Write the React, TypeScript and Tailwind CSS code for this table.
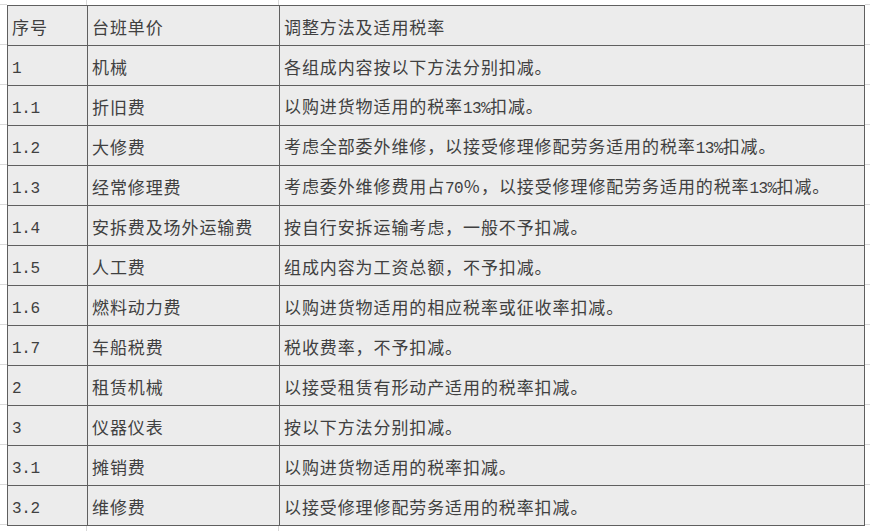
import React from 'react';

const ROWS: [string, string, string][] = [
  ['序号', '台班单价', '调整方法及适用税率'],
  ['1', '机械', '各组成内容按以下方法分别扣减。'],
  ['1.1', '折旧费', '以购进货物适用的税率13%扣减。'],
  ['1.2', '大修费', '考虑全部委外维修，以接受修理修配劳务适用的税率13%扣减。'],
  ['1.3', '经常修理费', '考虑委外维修费用占70％，以接受修理修配劳务适用的税率13%扣减。'],
  ['1.4', '安拆费及场外运输费', '按自行安拆运输考虑，一般不予扣减。'],
  ['1.5', '人工费', '组成内容为工资总额，不予扣减。'],
  ['1.6', '燃料动力费', '以购进货物适用的相应税率或征收率扣减。'],
  ['1.7', '车船税费', '税收费率，不予扣减。'],
  ['2', '租赁机械', '以接受租赁有形动产适用的税率扣减。'],
  ['3', '仪器仪表', '按以下方法分别扣减。'],
  ['3.1', '摊销费', '以购进货物适用的税率扣减。'],
  ['3.2', '维修费', '以接受修理修配劳务适用的税率扣减。'],
];

// ascii runs get the half-width mono face, like the sheet's SimSun digits
const Mixed: React.FC<{ text: string }> = ({ text }) => {
  const parts = text.split(/([0-9.%]+)/);
  return (
    <>
      {parts.map((p, i) =>
        /^[0-9.%]+$/.test(p) ? (
          <span key={i} className="font-['Liberation_Mono',monospace] text-[16px] tracking-[-0.6px]">
            {p}
          </span>
        ) : (
          <span key={i}>{p}</span>
        )
      )}
    </>
  );
};

const faint = 'border-[#d9d9d9]';
const cell = 'border border-[#5f5f5f] px-[4px] pt-[3px] text-[17px] tracking-[0.9px] whitespace-nowrap';

export default function App() {
  return (
    <div className="w-[870px] h-[531px] bg-white overflow-hidden flex font-['Noto_Sans_CJK_SC',sans-serif] text-[#404040]">
      {/* left gutter of the sheet */}
      <div className="w-[7px] flex flex-col">
        <div className={`h-[5px] border-b ${faint}`}></div>
        {ROWS.map((_, i) => (
          <div key={i} className={`h-[40px] border-b ${faint}`}></div>
        ))}
      </div>

      <div className="flex flex-col">
        <div className="h-[5px] flex">
          <div className={`w-[80px] border-r ${faint}`}></div>
          <div className={`w-[192px] border-r ${faint}`}></div>
          <div className="w-[584px]"></div>
        </div>
        <table className="border-collapse bg-[#ececec] table-fixed w-[857px]">
          <colgroup>
            <col className="w-[80px]" />
            <col className="w-[192px]" />
            <col className="w-[585px]" />
          </colgroup>
          <tbody>
            {ROWS.map(([a, b, c], i) => (
              <tr key={i} className="h-[40px]">
                <td className={cell}>
                  {/^[0-9.]+$/.test(a) ? (
                    <span className="font-['Liberation_Mono',monospace] text-[16px] tracking-[-0.4px]">{a}</span>
                  ) : (
                    a
                  )}
                </td>
                <td className={cell}>{b}</td>
                <td className={cell}>
                  <Mixed text={c} />
                </td>
              </tr>
            ))}
          </tbody>
        </table>
        <div className="h-[6px] flex">
          <div className={`w-[80px] border-r ${faint}`}></div>
          <div className={`w-[192px] border-r ${faint}`}></div>
          <div className="w-[584px]"></div>
        </div>
      </div>

      {/* right gutter */}
      <div className="flex-1 flex flex-col">
        <div className={`h-[5px] border-b ${faint}`}></div>
        {ROWS.map((_, i) => (
          <div key={i} className={`h-[40px] border-b ${faint}`}></div>
        ))}
      </div>
    </div>
  );
}
